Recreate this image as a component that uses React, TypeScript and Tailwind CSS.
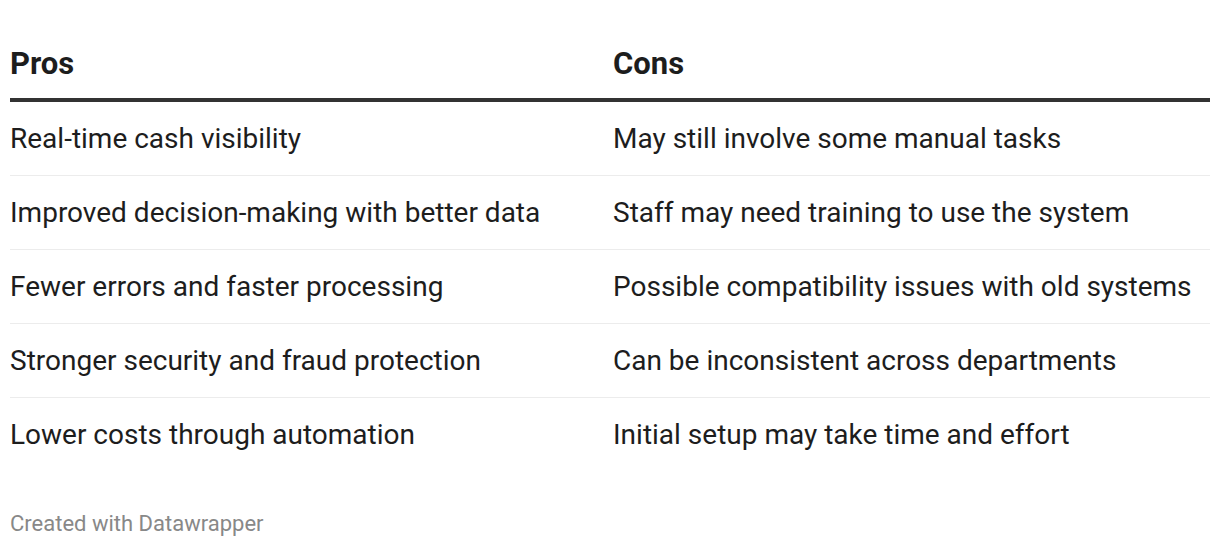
import React from "react";

const rows: [string, string][] = [
  ["Real-time cash visibility", "May still involve some manual tasks"],
  ["Improved decision-making with better data", "Staff may need training to use the system"],
  ["Fewer errors and faster processing", "Possible compatibility issues with old systems"],
  ["Stronger security and fraud protection", "Can be inconsistent across departments"],
  ["Lower costs through automation", "Initial setup may take time and effort"],
];

export default function App() {
  return (
    <div
      className="w-[1220px] h-[546px] bg-white px-[10px] pt-[40px] text-[#1d1d1d]"
      style={{ fontFamily: "Roboto, 'Noto Sans', sans-serif" }}
    >
      <div className="grid grid-cols-[603px_1fr] border-b-[4px] border-[#333333] h-[62px] pb-[12px] items-center text-[31px] font-bold leading-none">
        <div>Pros</div>
        <div>Cons</div>
      </div>
      {rows.map(([a, b], i) => (
        <div
          key={i}
          className={`grid grid-cols-[603px_1fr] h-[74px] items-center text-[28px] leading-none ${
            i < rows.length - 1 ? "border-b border-[#ececec]" : ""
          }`}
        >
          <div>{a}</div>
          <div>{b}</div>
        </div>
      ))}
      <div className="mt-[41px] text-[22px] text-[#888888] leading-none">Created with Datawrapper</div>
    </div>
  );
}
